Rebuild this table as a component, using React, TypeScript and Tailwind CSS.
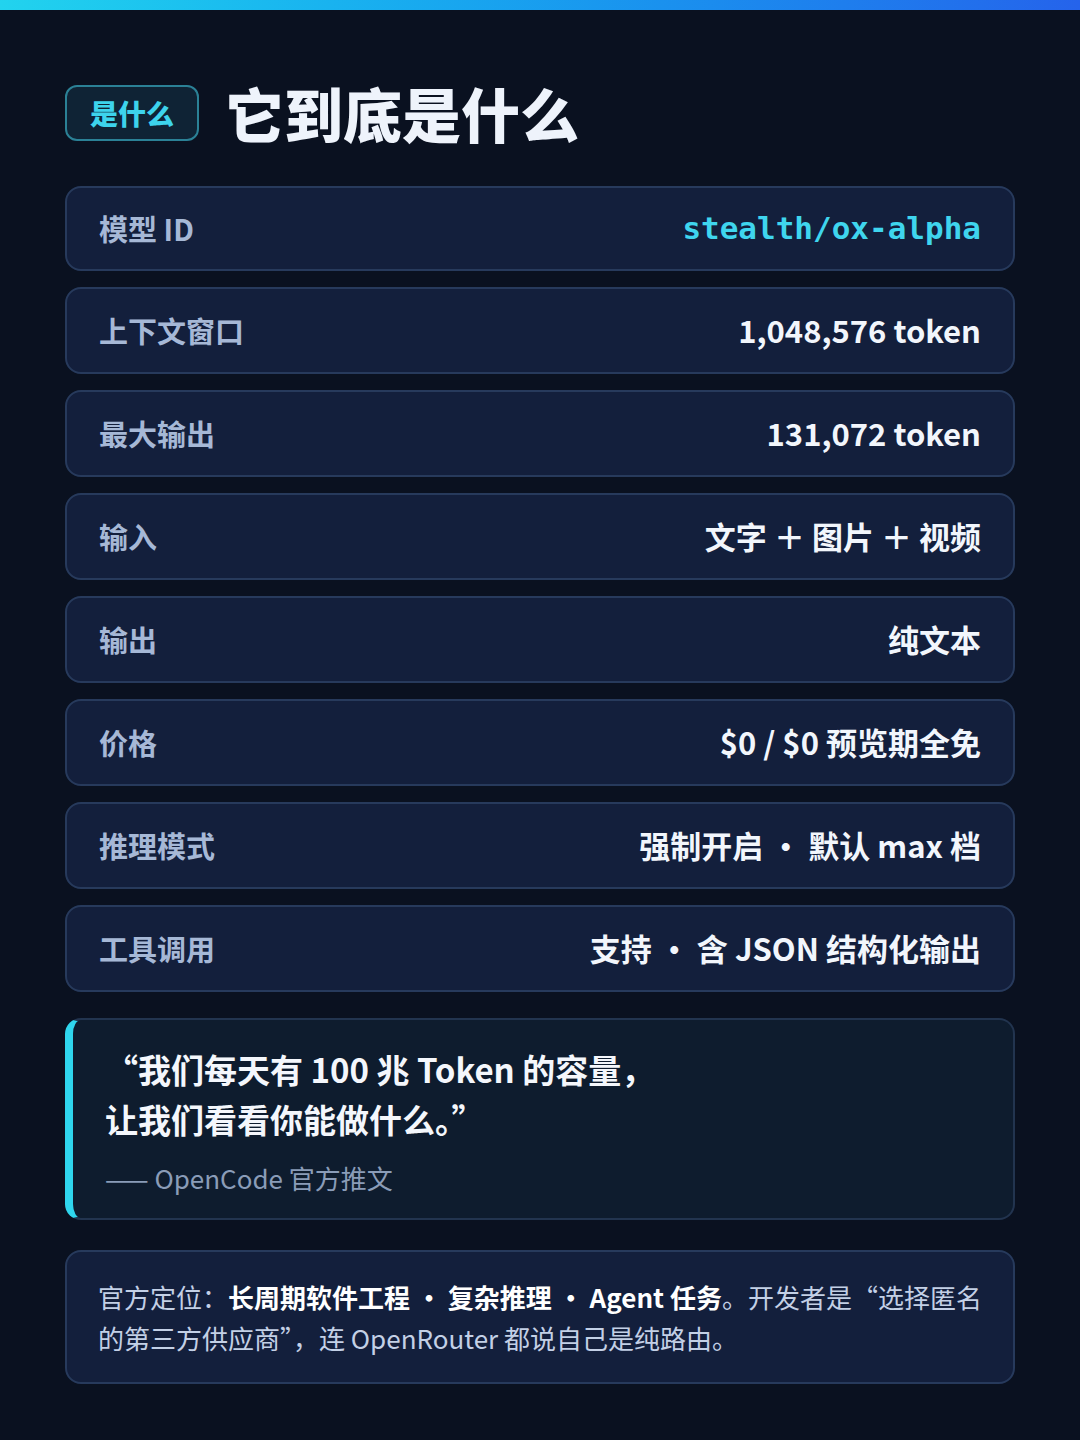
const rows: { label: string; value: string; mono?: boolean }[] = [
  { label: "模型 ID", value: "stealth/ox-alpha", mono: true },
  { label: "上下文窗口", value: "1,048,576 token" },
  { label: "最大输出", value: "131,072 token" },
  { label: "输入", value: "文字 ＋ 图片 ＋ 视频" },
  { label: "输出", value: "纯文本" },
  { label: "价格", value: "$0 / $0 预览期全免" },
  { label: "推理模式", value: "强制开启 · 默认 max 档" },
  { label: "工具调用", value: "支持 · 含 JSON 结构化输出" },
];

function SpecRow({ label, value, mono }: { label: string; value: string; mono?: boolean }) {
  return (
    <li
      className={`flex items-center justify-between rounded-[16px] border-2 border-[#273a5c] bg-[#131f3c] px-[32px] ${
        mono ? "h-[85px]" : "h-[87px]"
      }`}
    >
      <span className="text-[29px] font-bold text-[#a6b8d6]">{label}</span>
      {mono ? (
        <span className="font-['DejaVu_Sans_Mono','Liberation_Mono',monospace] text-[31px] font-bold text-[#3fd5ee]">
          {value}
        </span>
      ) : (
        <span className="text-[31px] font-bold text-[#f2f6fc]">{value}</span>
      )}
    </li>
  );
}

export default function App() {
  return (
    <div className="min-h-[1440px] w-[1080px] bg-[#0a1120] font-['Noto_Sans_CJK_SC','Noto_Sans',sans-serif]">
      <div className="h-[10px] bg-gradient-to-r from-[#22d3ee] to-[#2563eb]" />

      <main className="px-[65px] pt-[61px]">
        <header className="flex items-center gap-[26px]">
          <span className="rounded-[12px] border-2 border-[#2b8196] bg-[#0f2335] px-[23px] py-[7px] text-[28px] leading-[38px] font-black text-[#3dd3ec]">
            是什么
          </span>
          <h1 className="text-[59px] leading-[84px] font-black text-[#eef3fb]">它到底是什么</h1>
        </header>

        <ul className="mt-[31px] flex flex-col gap-[16px]">
          {rows.map((r) => (
            <SpecRow key={r.label} {...r} />
          ))}
        </ul>

        <blockquote className="mt-[26px] rounded-[16px] border-2 border-l-[8px] border-[#22344f] border-l-[#2fd6ee] bg-[#0e1c2e] pt-[24px] pr-[32px] pb-[22px] pl-[32px]">
          <p className="text-[33px] leading-[50px] font-bold text-[#f4f7fc]">
            “我们每天有 100 兆 Token 的容量，
            <br />
            让我们看看你能做什么。”
          </p>
          <p className="mt-[16px] text-[26px] leading-[36px] text-[#8a9cb8]">—— OpenCode 官方推文</p>
        </blockquote>

        <div className="mt-[30px] rounded-[16px] border-2 border-[#273a5c] bg-[#131f3c] px-[31px] pt-[24px] pb-[24px]">
          <p className="text-[26px] leading-[41px] text-[#c3d0e6]">
            官方定位：
            <b className="font-bold text-white">长周期软件工程 · 复杂推理 · Agent 任务</b>
            。开发者是“选择匿名
            <br />
            的第三方供应商”，连 OpenRouter 都说自己是纯路由。
          </p>
        </div>
      </main>
    </div>
  );
}
